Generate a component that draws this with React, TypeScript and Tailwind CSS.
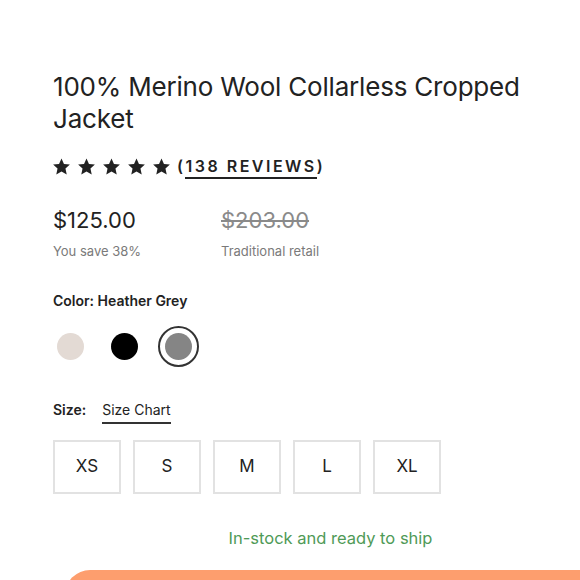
const sizes = ["XS", "S", "M", "L", "XL"];

function Star() {
  return (
    <svg viewBox="0 0 24 24" className="h-[19px] w-[19px]" fill="#222">
      <path d="M12 1.8l3.1 6.9 7.5.8-5.6 5.1 1.6 7.4L12 18.2 5.4 22l1.6-7.4L1.4 9.5l7.5-.8z" />
    </svg>
  );
}

export default function App() {
  return (
    <div
      className="w-[580px] h-[580px] overflow-hidden bg-white text-[#222]"
      style={{ fontFamily: "Inter, 'Liberation Sans', sans-serif" }}
    >
      <div className="w-[555px] pl-[53px] pt-[71px] box-content">
        <h1 className="max-w-[480px] text-[26px] leading-[32px] tracking-[-0.2px] font-normal">
          100% Merino Wool Collarless Cropped Jacket
        </h1>

        {/* rating */}
        <div className="mt-[19px] flex items-center">
          <div className="-ml-[1px] flex gap-[6px]">
            <Star />
            <Star />
            <Star />
            <Star />
            <Star />
          </div>
          <span className="ml-[6px] text-[16px] leading-[24px] font-semibold tracking-[2.5px]">
            (<span className="border-b-2 border-[#222] pb-[1px]">138 REVIEWS</span>)
          </span>
        </div>

        {/* price */}
        <div className="mt-[28px] flex">
          <div className="w-[168px]">
            <div className="text-[22px] leading-[28px]">$125.00</div>
            <div className="mt-[8px] text-[13px] text-[#7a7a7a]">You save 38%</div>
          </div>
          <div>
            <div className="text-[22px] leading-[28px] text-[#8a8a8a] line-through">$203.00</div>
            <div className="mt-[8px] text-[13px] text-[#7a7a7a]">Traditional retail</div>
          </div>
        </div>

        {/* color */}
        <div className="mt-[28px] text-[14px] font-semibold">Color: Heather Grey</div>
        <div className="-ml-[3px] mt-[15px] flex items-center gap-[13px]">
          <div className="flex h-[41px] w-[41px] items-center justify-center">
            <div className="h-[27px] w-[27px] rounded-full bg-[#e3dad4]" />
          </div>
          <div className="flex h-[41px] w-[41px] items-center justify-center">
            <div className="h-[27px] w-[27px] rounded-full bg-black" />
          </div>
          <div className="flex h-[41px] w-[41px] items-center justify-center rounded-full border-2 border-[#333]">
            <div className="h-[27px] w-[27px] rounded-full bg-[#858585]" />
          </div>
        </div>

        {/* size */}
        <div className="mt-[32px] flex items-baseline text-[14px]">
          <span className="font-semibold">Size:</span>
          <span className="ml-[16px] border-b-2 border-[#333] pb-[2px]">Size Chart</span>
        </div>
        <div className="mt-[16px] flex gap-[12px]">
          {sizes.map((s) => (
            <div
              key={s}
              className="flex h-[54px] w-[68px] items-center justify-center border-2 border-[#e2e2e2] text-[17px]"
            >
              {s}
            </div>
          ))}
        </div>

        <div className="mt-[32px] text-center text-[16.5px] text-[#4f9a57]">In-stock and ready to ship</div>
        <div className="ml-[12px] mt-[20px] h-[50px] rounded-full bg-[#fd9e6e]" />
      </div>
    </div>
  );
}
